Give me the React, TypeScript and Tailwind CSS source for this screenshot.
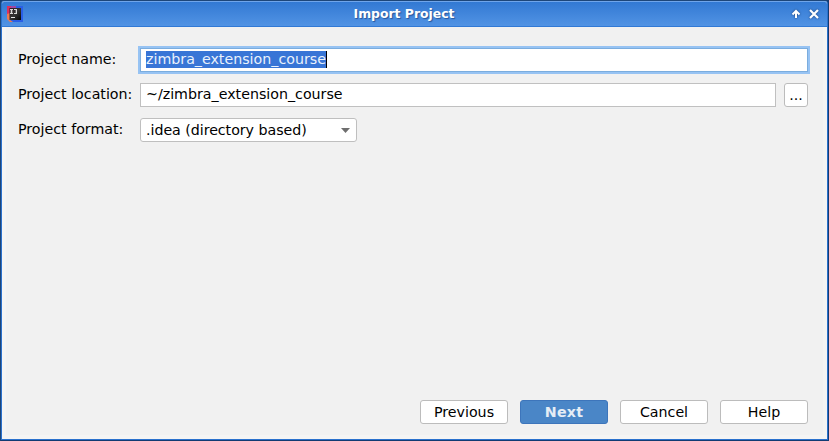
import React from "react";

function IdeaLogo() {
  return (
    <svg width="16" height="16" viewBox="0 0 16 16">
      <defs>
        <linearGradient id="screen" x1="0" y1="0" x2="1" y2="1">
          <stop offset="0" stopColor="#2a1a20" />
          <stop offset="0.5" stopColor="#333" />
          <stop offset="1" stopColor="#050505" />
        </linearGradient>
      </defs>
      <path d="M0 0h8v13H0z" fill="#dc3060" />
      <path d="M6 0h10v16H5l-3-2z" fill="#2a5fe6" />
      <path d="M0 8l3-1v7l3 2H3L0 13z" fill="#ee7a50" />
      <path d="M4 0h5v3H3z" fill="#9a48a5" />
      <rect x="2.500" y="2" width="11.500" height="12" fill="url(#screen)" />
      <path d="M3 3h3v1H5.300v3H6v1H3V7h.7V4H3zM7 3h3v5H7V7h1.700V4H7z" fill="#d8d8d8" />
      <path d="M4 11h4v1H4z" fill="#e6e6e6" />
    </svg>
  );
}

function TitleBar() {
  return (
    <header className="flex h-6 items-center justify-between bg-linear-to-b from-[#3279d3] to-[#5193e4] pr-2 pl-[5px]">
      <IdeaLogo />
      <h1 className="-ml-[6px] pt-px text-[12.4px] leading-none font-bold text-white [text-shadow:1px_1px_1px_#28569b]">
        Import Project
      </h1>
      <div className="flex gap-2">
        <svg width="10" height="10" viewBox="0 0 10 10" fill="none" stroke="#fff" strokeWidth="2" className="drop-shadow-[0_0_1px_#173e78]">
          <path d="M5 9V2M1.500 5.500L5 2l3.500 3.500" />
        </svg>
        <svg width="10" height="10" viewBox="0 0 10 10" fill="none" stroke="#fff" strokeWidth="2.2" className="drop-shadow-[0_0_1px_#173e78]">
          <path d="M1 1l8 8M9 1L1 9" />
        </svg>
      </div>
    </header>
  );
}

function Row({ label, children }: { label: string; children: React.ReactNode }) {
  return (
    <div className="flex h-6">
      <label className="w-[122px] shrink-0 pt-[3px] leading-4 whitespace-nowrap">{label}</label>
      {children}
    </div>
  );
}

function Button({ label, primary = false }: { label: string; primary?: boolean }) {
  return (
    <button
      className={
        primary
          ? "h-6 w-[88px] rounded-[3px] border border-[#3d75bb] bg-[#4a86c7] leading-[22px] font-bold tracking-[0.2px] text-[#e6edf5]"
          : "h-6 w-[88px] rounded-[3px] border border-[#bcbcbc] bg-white leading-[22px]"
      }
    >
      {label}
    </button>
  );
}

export default function App() {
  return (
    <div className="h-[441px] w-[829px] bg-[#123b73] [font-family:'DejaVu_Sans',sans-serif] text-[14.23px] text-black">
      <div className="h-full rounded-t-[4px] border border-t-[#1d4679] border-r-[#123b73] border-b-[#123b73] border-l-[#1d4679]">
        <div className="flex h-full flex-col overflow-hidden rounded-t-[3px] border border-t-[#6fa5ea] border-r-[#2a71cd] border-b-[#2a71cd] border-l-[#2a71cd] bg-[#f1f1f1]">
          <TitleBar />
          <div className="h-px shrink-0 bg-[#3179d5]" />
          <main className="flex grow flex-col justify-between border-4 border-t-0 border-[#f4f4f4] bg-[#f1f1f1] pt-[21px] pr-[15px] pb-[11px] pl-3">
            <div className="flex flex-col gap-[11px]">
              <Row label="Project name:">
                <div className="flex grow items-start border border-[#7badde] bg-white pt-[2px] pl-[5px] shadow-[0_0_0_2px_#97c3f3]">
                  <span className="h-[17px] border-r border-black bg-[#3875d6] leading-[17px] text-[#e9f1fc]">
                    zimbra_extension_course
                  </span>
                </div>
              </Row>
              <Row label="Project location:">
                <div className="w-[636px] border border-[#c0c0c0] bg-white pl-[5px] leading-[21px]">
                  ~/zimbra_extension_course
                </div>
                <button className="ml-2 w-6 rounded-[3px] border border-[#bcbcbc] bg-white leading-[22px]">...</button>
              </Row>
              <Row label="Project format:">
                <div className="flex w-[217px] items-center justify-between rounded-[3px] border border-[#bfbfbf] bg-white pr-[6px] pl-[5px] leading-[22px]">
                  <span className="tracking-[-0.04px]">.idea (directory based)</span>
                  <svg width="9" height="5" viewBox="0 0 9 5">
                    <path d="M0 0h9L4.500 5z" fill="#6e6e6e" />
                  </svg>
                </div>
              </Row>
            </div>
            <footer className="flex justify-end gap-3">
              <Button label="Previous" />
              <Button label="Next" primary />
              <Button label="Cancel" />
              <Button label="Help" />
            </footer>
          </main>
        </div>
      </div>
    </div>
  );
}
